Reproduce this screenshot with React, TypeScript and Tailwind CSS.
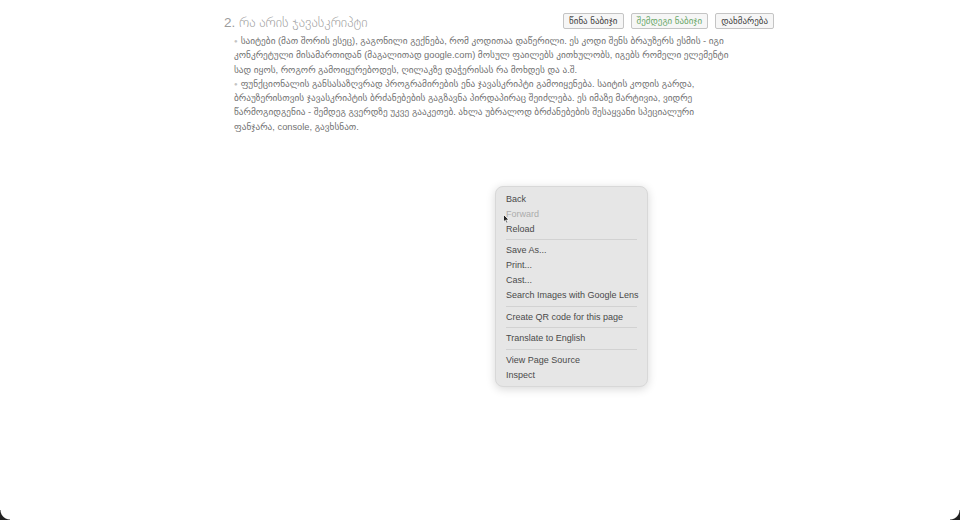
import React from 'react'

const bullets: string[][] = [
  [
    'საიტები (მათ შორის ესეც), გაგონილი გექნება, რომ კოდითაა დაწერილი. ეს კოდი შენს ბრაუზერს ესმის - იგი',
    'კონკრეტული მისამართიდან (მაგალითად google.com) მოსულ ფაილებს კითხულობს, იგებს რომელი ელემენტი',
    'სად იყოს, როგორ გამოიყურებოდეს, ღილაკზე დაჭერისას რა მოხდეს და ა.შ.',
  ],
  [
    'ფუნქციონალის განსასაზღვრად პროგრამირების ენა ჯავასკრიპტი გამოიყენება. საიტის კოდის გარდა,',
    'ბრაუზერისთვის ჯავასკრიპტის ბრძანებების გაგზავნა პირდაპირაც შეიძლება. ეს იმაზე მარტივია, ვიდრე',
    'წარმოგიდგენია - შემდეგ გვერდზე უკვე გააკეთებ. ახლა უბრალოდ ბრძანებების შესაყვანი სპეციალური',
    'ფანჯარა, console, გავხსნათ.',
  ],
]

const menuGroups: { label: string; disabled?: boolean }[][] = [
  [{ label: 'Back' }, { label: 'Forward', disabled: true }, { label: 'Reload' }],
  [{ label: 'Save As...' }, { label: 'Print...' }, { label: 'Cast...' }, { label: 'Search Images with Google Lens' }],
  [{ label: 'Create QR code for this page' }],
  [{ label: 'Translate to English' }],
  [{ label: 'View Page Source' }, { label: 'Inspect' }],
]

function NavButton({ children, green }: { children: React.ReactNode; green?: boolean }) {
  return (
    <button
      className={
        'h-[16px] px-[5px] border border-[#c4c4c4] bg-[#f6f6f6] rounded-[2px] text-[9px] leading-none ' +
        (green ? 'text-[#6aa86a]' : 'text-[#444]')
      }
    >
      {children}
    </button>
  )
}

function ContextMenu() {
  return (
    <div className="absolute left-[495px] top-[186px] w-[153px] rounded-[8px] bg-[#e6e6e6] border border-[#d8d8d8] shadow-[0_2px_10px_rgba(0,0,0,0.16)] px-[5px] pt-[5px] pb-[3px] font-['Liberation_Sans',sans-serif] text-[9px] text-[#4a4a4a]">
      {menuGroups.map((group, gi) => (
        <div key={gi}>
          {gi > 0 && <div className="mx-[5px] my-[3px] h-px bg-[#d2d2d2]" />}
          {group.map((item) => (
            <div
              key={item.label}
              className={
                'h-[14.8px] leading-[14.8px] px-[5px] whitespace-nowrap ' + (item.disabled ? 'text-[#acacac]' : '')
              }
            >
              {item.label}
            </div>
          ))}
        </div>
      ))}
      <svg className="absolute left-[7px] top-[27px]" width="7" height="10" viewBox="0 0 7 10">
        <path d="M0.5 0.5 L0.5 8 L2.3 6.3 L3.6 9.3 L4.8 8.8 L3.6 5.9 L6 5.9 Z" fill="#222" stroke="#fff" strokeWidth="0.8" />
      </svg>
    </div>
  )
}

export default function App() {
  return (
    <div className="relative w-[960px] h-[520px] bg-white overflow-hidden font-['Liberation_Sans','DejaVu_Sans',sans-serif]">
      <div className="ml-[224px] w-[550px] pt-[13px]">
        <div className="flex items-start justify-between">
          <h1 className="text-[13.5px] leading-[20px] text-[#9c9c9c] font-light">2. რა არის ჯავასკრიპტი</h1>
          <div className="flex gap-[7px]">
            <NavButton>წინა ნაბიჯი</NavButton>
            <NavButton green>შემდეგი ნაბიჯი</NavButton>
            <NavButton>დახმარება</NavButton>
          </div>
        </div>
        <div className="mt-[1px] pl-[10px] text-[9.3px] leading-[14.3px] text-[#727272]">
          {bullets.map((lines, bi) => (
            <div key={bi}>
              {lines.map((line, li) => (
                <div key={li} className="whitespace-nowrap">
                  {li === 0 && <span className="text-[#c4c4c4] text-[6px] align-top mr-[3px]">●</span>}
                  {line}
                </div>
              ))}
            </div>
          ))}
        </div>
      </div>
      <ContextMenu />
      <div className="absolute left-0 bottom-0 w-[10px] h-[10px] bg-[radial-gradient(circle_at_100%_0,transparent_9px,#222_10px)]" />
      <div className="absolute right-0 bottom-0 w-[10px] h-[10px] bg-[radial-gradient(circle_at_0_0,transparent_9px,#222_10px)]" />
    </div>
  )
}
